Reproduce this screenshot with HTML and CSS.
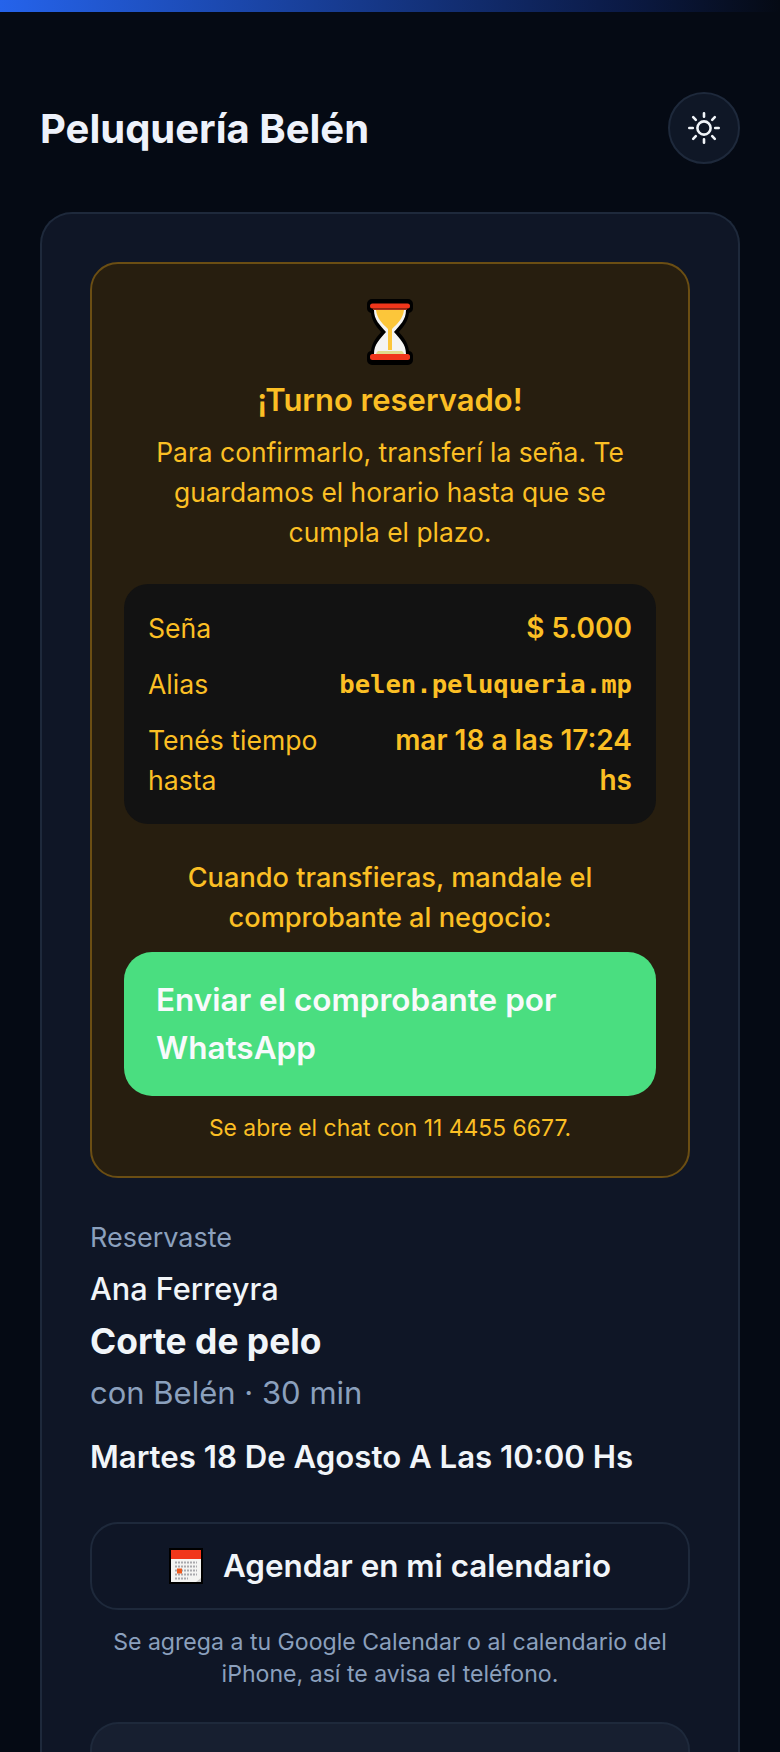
FILE: index.html
```html
<!DOCTYPE html>
<html lang="es">
<head>
  <meta charset="UTF-8">
  <title>Peluquería Belén</title>
  <link rel="stylesheet" href="styles.css">
</head>
<body>
  <div class="top-bar"></div>

  <header class="site-header">
    <h1>Peluquería Belén</h1>
    <button class="theme-btn" aria-label="Cambiar tema">
      <svg width="34" height="34" viewBox="0 0 34 34" fill="none" stroke="#f1f5f9" stroke-width="2.6" stroke-linecap="round">
        <circle cx="17" cy="17" r="6.600"/>
        <path d="M17 2.300v3.500M17 28.200v3.500M2.300 17h3.500M28.200 17h3.500M6.200 6.200l2.600 2.600M25.200 25.200l2.600 2.600M6.200 27.800l2.600-2.600M25.200 8.800l2.600-2.600"/>
      </svg>
    </button>
  </header>

  <main class="card">
    <section class="notice">
      <svg class="hourglass" width="46" height="66" viewBox="0 0 46 66">
        <path d="M5 0h36a5 5 0 0 1 5 5v4a5 5 0 0 1-4 5c-1 9-6 14-10 19 4 5 9 10 10 19a5 5 0 0 1 4 5v4a5 5 0 0 1-5 5H5a5 5 0 0 1-5-5v-4a5 5 0 0 1 4-5c1-9 6-14 10-19C10 28 5 23 4 14a5 5 0 0 1-4-5V5a5 5 0 0 1 5-5z" fill="#000"/>
        <path d="M7 11h32c0 10-6 15-12 22 6 7 12 12 12 22H7c0-10 6-15 12-22C13 26 7 21 7 11z" fill="#f4f4f2"/>
        <path d="M9 11h28c-1 9-7 14-12 19v21h-4V30C16 25 10 20 9 11z" fill="#fcc63a"/>
        <path d="M9 55c1-3 2-3 3-3h22c1 0 2 0 3 3z" fill="#dfdc8c"/>
        <rect x="3" y="4.500" width="40" height="5" rx="2.500" fill="#f1361b"/>
        <rect x="3" y="55" width="40" height="6" rx="2.500" fill="#f1361b"/>
        <rect x="6" y="9.500" width="34" height="1.500" fill="#a5321c"/>
      </svg>
      <h2>¡Turno reservado!</h2>
      <p class="notice-text">Para confirmarlo, transferí la seña. Te guardamos el horario hasta que se cumpla el plazo.</p>

      <dl class="pay-box">
        <div class="pay-row">
          <dt>Seña</dt>
          <dd class="amount">$ 5.000</dd>
        </div>
        <div class="pay-row">
          <dt>Alias</dt>
          <dd class="alias">belen.peluqueria.mp</dd>
        </div>
        <div class="pay-row">
          <dt>Tenés tiempo hasta</dt>
          <dd>mar 18 a las 17:24 hs</dd>
        </div>
      </dl>

      <p class="send-text">Cuando transfieras, mandale el comprobante al negocio:</p>
      <a class="whatsapp-btn" href="#">Enviar el comprobante por WhatsApp</a>
      <p class="chat-note">Se abre el chat con 11 4455 6677.</p>
    </section>

    <section class="summary">
      <div class="summary-label">Reservaste</div>
      <div class="summary-name">Ana Ferreyra</div>
      <div class="summary-service">Corte de pelo</div>
      <div class="summary-staff">con Belén · 30 min</div>
      <div class="summary-date">Martes 18 De Agosto A Las 10:00 Hs</div>
    </section>

    <a class="calendar-btn" href="#">
      <svg width="34" height="36" viewBox="0 0 34 36">
        <rect width="34" height="36" fill="#000"/>
        <rect x="2" y="2" width="30" height="32" fill="#f4f4f2"/>
        <rect x="2" y="2" width="30" height="9" fill="#f1361b"/>
        <path d="M6 14.500h22M6 18.500h22M6 22.500h22M6 26.500h22M6 30.500h13" stroke="#a9a9ad" stroke-width="2" stroke-dasharray="2 1"/>
        <rect x="8" y="20.500" width="5" height="5" fill="#ef5a1e"/>
        <path d="M27 34l5-4v4z" fill="#c9c9c9"/>
      </svg>
      <span>Agendar en mi calendario</span>
    </a>
    <p class="calendar-note">Se agrega a tu Google Calendar o al calendario del iPhone, así te avisa el teléfono.</p>

    <div class="next-box"></div>
  </main>
</body>
</html>
```

FILE: styles.css
```css
* {
  box-sizing: border-box;
}

body {
  margin: 0;
  background-color: #050a14;
  color: #f1f5f9;
  font-family: "Inter", "Liberation Sans", sans-serif;
}

.top-bar {
  height: 12px;
  background: linear-gradient(90deg, #2563eb, #0b1a45 80%, #050a14);
}

.site-header {
  display: flex;
  align-items: center;
  justify-content: space-between;
  padding: 80px 40px 48px;
}

.site-header h1 {
  margin: 0;
  font-size: 40px;
  font-weight: 700;
  color: #eef2fb;
}

.theme-btn {
  display: flex;
  align-items: center;
  justify-content: center;
  width: 72px;
  height: 72px;
  padding: 0;
  border: 2px solid #1e293b;
  border-radius: 50%;
  background-color: #0f1726;
}

.card {
  height: 1540px;
  margin: 0 40px;
  padding: 48px 48px 0;
  border: 2px solid #1e293b;
  border-bottom: none;
  border-radius: 32px 32px 0 0;
  background-color: #0f1626;
}

.notice {
  display: flex;
  flex-direction: column;
  align-items: center;
  padding: 35px 32px 32px;
  border: 2px solid #6b4e13;
  border-radius: 28px;
  background-color: #271e0f;
  color: #fbbf24;
  text-align: center;
}

.hourglass {
  display: block;
}

.notice h2 {
  margin: 15px 0 12px;
  font-size: 31px;
  line-height: 40px;
  font-weight: 600;
}

.notice-text {
  max-width: 490px;
  margin: 0 0 32px;
  font-size: 26.400px;
  line-height: 40px;
}

.pay-box {
  display: flex;
  flex-direction: column;
  gap: 16px;
  width: 100%;
  margin: 0 0 34px;
  padding: 24px;
  border-radius: 24px;
  background-color: #121212;
  font-size: 26.600px;
  line-height: 40px;
}

.pay-row {
  display: flex;
  justify-content: space-between;
  gap: 24px;
  text-align: left;
}

.pay-row dt {
  flex: 0 1 190px;
  min-width: 0;
}

.pay-row dd {
  flex: none;
  width: 250px;
  margin: 0;
  font-size: 28px;
  font-weight: 600;
  text-align: right;
}

.pay-row .alias {
  width: auto;
  font-family: "DejaVu Sans Mono", monospace;
  font-size: 25.600px;
  font-weight: 700;
}

.send-text {
  margin: 0 0 14px;
  font-size: 27.200px;
  line-height: 40px;
  font-weight: 500;
}

.whatsapp-btn {
  display: block;
  width: 100%;
  padding: 24px 32px;
  border-radius: 28px;
  background-color: #4ade80;
  color: #f8fafc;
  font-size: 31.500px;
  line-height: 48px;
  font-weight: 600;
  text-align: left;
  text-decoration: none;
}

.chat-note {
  margin: 16px 0 0;
  font-size: 22.900px;
  line-height: 32px;
}

.summary {
  margin-top: 40px;
}

.summary-label {
  color: #8ba0bd;
  font-size: 27px;
  line-height: 40px;
}

.summary-name {
  margin-top: 10px;
  font-size: 30.700px;
  line-height: 42px;
  font-weight: 500;
}

.summary-service {
  margin-top: 10px;
  font-size: 35.400px;
  line-height: 44px;
  font-weight: 700;
}

.summary-staff {
  margin-top: 7px;
  color: #8ba0bd;
  font-size: 31px;
  line-height: 44px;
}

.summary-date {
  margin-top: 20px;
  font-size: 31.200px;
  line-height: 44px;
  font-weight: 600;
}

.calendar-btn {
  display: flex;
  align-items: center;
  justify-content: center;
  gap: 20px;
  height: 88px;
  margin-top: 43px;
  border: 2px solid #1e293b;
  border-radius: 28px;
  color: #f1f5f9;
  font-size: 31.400px;
  font-weight: 600;
  text-decoration: none;
}

.calendar-note {
  margin: 16px 0 0;
  color: #8ba0bd;
  font-size: 23.100px;
  line-height: 32px;
  text-align: center;
}

.next-box {
  height: 30px;
  margin-top: 32px;
  border: 2px solid #1e293b;
  border-bottom: none;
  border-radius: 28px 28px 0 0;
  background-color: #171f30;
}
```
